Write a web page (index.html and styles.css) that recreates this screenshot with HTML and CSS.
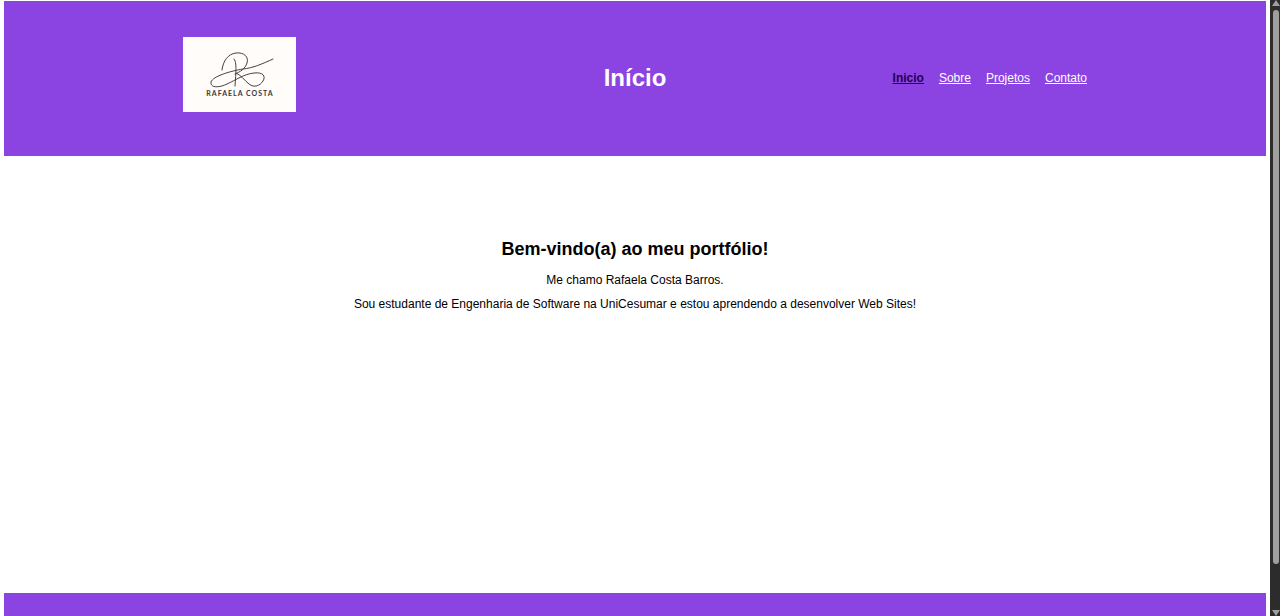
FILE: index.html
```html
<!DOCTYPE html>
<html lang="pt-BR">
<head>
<meta charset="utf-8">
<title>Início</title>
<link rel="stylesheet" href="styles.css">
</head>
<body>
<div class="page">
  <header class="header">
    <div class="header-inner">
      <svg class="logo" viewBox="0 0 113 75" role="img" aria-label="Rafaela Costa">
        <g class="logo-strokes">
          <path d="M39 33C40 24 45 17 53 16C61 15 66 20 64 26C62 32 57 35 52 37"/>
          <path d="M51 22C54 25 53 35 52 49"/>
          <path d="M90 22C79 27 70 31 60 32C48 34 30 39 28 45C27 51 36 51 44 47C53 43 61 37 71 36C80 35 83 39 80 44C77 49 71 51 66 47C61 43 58 38 53 36"/>
        </g>
        <text class="logo-text" x="57" y="59" text-anchor="middle">RAFAELA COSTA</text>
      </svg>
      <h1 class="title">Início</h1>
      <nav class="nav">
        <a class="nav-link nav-link-active" href="#inicio">Inicio</a>
        <a class="nav-link" href="#sobre">Sobre</a>
        <a class="nav-link" href="#projetos">Projetos</a>
        <a class="nav-link" href="#contato">Contato</a>
      </nav>
    </div>
  </header>
  <main class="main">
    <h2 class="welcome">Bem-vindo(a) ao meu portfólio!</h2>
    <p class="text">Me chamo Rafaela Costa Barros.</p>
    <p class="text">Sou estudante de Engenharia de Software na UniCesumar e estou aprendendo a desenvolver Web Sites!</p>
  </main>
  <footer class="footer"></footer>
</div>
<div class="scrollbar" aria-hidden="true">
  <svg class="arrow" viewBox="0 0 8 6"><path d="M4 0L8 6H0Z"/></svg>
  <div class="track"><div class="thumb"></div></div>
  <svg class="arrow" viewBox="0 0 8 6"><path d="M0 0H8L4 6Z"/></svg>
</div>
</body>
</html>
```
FILE: styles.css
```css
* {
  box-sizing: border-box;
}

body {
  margin: 0;
  height: 100vh;
  display: flex;
  overflow: hidden;
  background: #fff;
  color: #000;
  font-family: "Liberation Sans", Arial, sans-serif;
  font-size: 12px;
  line-height: 16px;
}

.page {
  flex: 1;
  display: flex;
  flex-direction: column;
  padding: 1px 4px 0;
}

.header {
  background: #8b43e1;
  padding: 36px 24px 44px;
}

.header-inner {
  display: grid;
  grid-template-columns: 1fr auto 1fr;
  align-items: center;
  max-width: 904px;
  margin: 0 auto;
}

.logo {
  display: block;
  width: 113px;
  height: 75px;
  background: #fffcf9;
}

.logo-strokes {
  fill: none;
  stroke: #444042;
  stroke-width: 1;
  stroke-linecap: round;
}

.logo-text {
  fill: #3a3638;
  font-family: Lato, sans-serif;
  font-size: 7px;
  font-weight: 700;
  letter-spacing: 1px;
}

.title {
  margin: 6px 0 0;
  color: #fff;
  font-size: 24px;
  line-height: 28px;
}

.nav {
  display: flex;
  justify-content: flex-end;
  gap: 15px;
  margin-top: 6px;
}

.nav-link {
  color: #fff;
}

.nav-link-active {
  color: #250052;
  font-weight: 700;
}

.main {
  flex: 1;
  padding: 82px 24px 0;
  text-align: center;
}

.welcome {
  margin: 0 0 12px;
  font-size: 18px;
  line-height: 22px;
}

.text {
  margin: 0 0 8px;
}

.footer {
  height: 23px;
  background: #8b43e1;
}

.scrollbar {
  width: 10px;
  padding-left: 2px;
  display: flex;
  flex-direction: column;
  align-items: center;
  background: #2c2c2c;
}

.arrow {
  width: 8px;
  height: 6px;
  flex: none;
  fill: #9f9f9f;
}

.track {
  flex: 1;
  width: 6px;
  padding: 4px 0;
}

.thumb {
  height: 93%;
  border-radius: 3px;
  background: #9f9f9f;
}
```
